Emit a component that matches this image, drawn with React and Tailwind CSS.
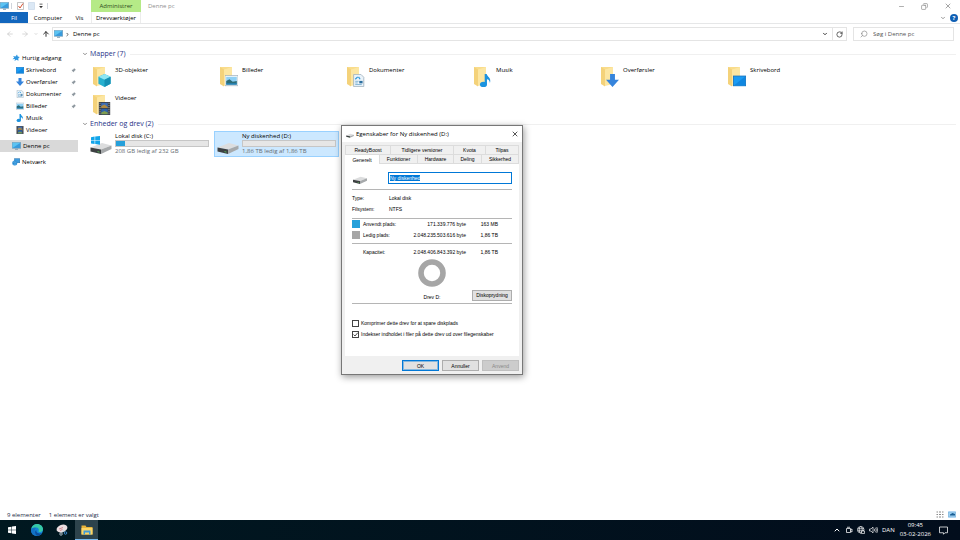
import React from 'react'
import { ArrowLeft, ArrowRight, ArrowUp, ChevronDown, ChevronRight, ChevronUp, Copy, Minus, RotateCw, Search, X } from 'lucide-react'
import { BsPinAngleFill } from 'react-icons/bs'

function PcIcon({ className }) {
    return (
        <svg viewBox="0 0 18 16" className={className} aria-hidden="true">
            <rect x="0.5" y="1" width="17" height="11.5" fill="#3a9bdc" stroke="#7d9bb0" strokeWidth="1" />
            <path d="M1 1.5h16L1 12z" fill="#5cc3f2" />
            <path d="M6 14.5h6" stroke="#7d9bb0" strokeWidth="2" />
        </svg>
    )
}

// small emblem used in the sidebar and on top of the folders
function Emblem({ kind, ...props }) {
    return (
        <svg viewBox="0 0 16 16" aria-hidden="true" {...props}>
            {kind === 'star' && <path d="M10 1l1.500 4 4 1-3 3 .5 4.500-4-2L5 14l1-4-5 .5 3.500-3.500L2 4l5 1z" fill="#2f97e0" />}
            {kind === 'desktop' && <>
                <rect x="0.500" y="2.500" width="15" height="12" fill="#1a9bf4" stroke="#1673bd" />
                <path d="M1 14L15 3v11z" fill="#1087e0" />
            </>}
            {kind === 'down' && <path d="M5 0h6v7h5l-8 9-8-9h5z" fill="#3584dc" />}
            {kind === 'doc' && <>
                <path d="M2 .5h9l3.500 3.500v11.500H2z" fill="#eaf3fa" stroke="#9fb0bd" />
                <path d="M4 6.500l3-3M8 3.500l2 3" stroke="#2f97d8" strokeWidth="1.500" />
                <path d="M4 9h4M4 11h3M4 13h8" stroke="#6ea7cc" strokeWidth="1" />
                <rect x="9" y="8.500" width="4" height="3" fill="#2c6f9f" />
            </>}
            {kind === 'picture' && <>
                <rect x="0" y="2" width="16" height="12.500" fill="#f5f8fa" stroke="#9aabb8" strokeWidth=".8" />
                <rect x="1.500" y="3.500" width="13" height="9.500" fill="#8fd0f5" />
                <path d="M1.500 8.500l4-2 4 3 5-1V13h-13z" fill="#2c6b76" />
                <path d="M1.500 11.500h13V13h-13z" fill="#2187c4" />
            </>}
            {kind === 'music' && <>
                <ellipse cx="5.500" cy="12.800" rx="4.300" ry="3.200" fill="#1c93df" />
                <path d="M7 0h2.500c.5 3.500 6 4.500 4 11-.4-2.800-1.600-4.200-3.700-4.500v6.500H7z" fill="#1c93df" />
            </>}
            {kind === 'video' && <>
                <rect x="1" y="0" width="14" height="16" fill="#3a3f45" />
                <path d="M2.500 1v14M13.500 1v14" stroke="#b9bec4" strokeWidth="1" strokeDasharray="1.300 1.300" />
                <rect x="4" y="1" width="8" height="6.500" fill="#3f6fb5" />
                <rect x="4" y="8.500" width="8" height="6.500" fill="#2d62a8" />
                <path d="M4 5l4-2 4 3v1.500H4z" fill="#b0893e" />
                <path d="M4 13l4-2 4 2v2H4z" fill="#7f9d4f" />
            </>}
            {kind === 'cube' && <>
                <path d="M8 0l7.500 3.500v8.500L8 16 .5 12V3.500z" fill="#27b0cf" />
                <path d="M8 0l7.500 3.500L8 7 .5 3.500z" fill="#8ee6f3" />
                <path d="M8 7l7.500-3.500v8.500L8 16z" fill="#1590b4" />
            </>}
            {kind === 'network' && <>
                <rect x="5" y="1.500" width="10.500" height="8" fill="#3c9be0" stroke="#236da8" />
                <circle cx="5.500" cy="10" r="5" fill="#2689d2" />
                <path d="M1.500 8.500c3-2 5 1 7.500-.5M3 13c1-2 4 0 6-1" stroke="#8ed0f7" strokeWidth="1.200" fill="none" />
            </>}
        </svg>
    )
}

function FolderIcon({ kind }) {
    return (
        <svg viewBox="0 0 20 22" className="h-[22px] w-5 shrink-0" aria-hidden="true">
            <path d="M1 1h12v16H1z" fill="#f9dc8b" />
            <path d="M5 3.500L13 1v17l-8 2z" fill="#fce6a2" />
            <path d="M1 1l4 2.500V20.500l-4-2.500z" fill="#f4d27a" />
            <Emblem kind={kind} x="6" y="8" width="13" height="13" />
        </svg>
    )
}

function DriveIcon({ windows, className }) {
    return (
        <svg viewBox="0 0 22 18" className={className} aria-hidden="true">
            <path d="M.5 11.500L12 7l9.500 2.500L11 13.500z" fill="#dcddde" />
            <path d="M.5 11.500L11 13.500v4.500L.5 15.500z" fill="#3d4042" />
            <path d="M11 13.500l10.500-4v3.500L11 18z" fill="#a6a9ab" />
            <path d="M7.500 15.200l2 .5v.8l-2-.5z" fill="#5fd35f" />
            {windows && <path d="M1 1.200L4.600.6V4H1zM5.200.5L10 0V4H5.200zM1 4.600h3.600V8L1 7.400zM5.200 4.600H10v4.200l-4.800-.7z" fill="#12a5ea" />}
        </svg>
    )
}

const quickAccess = [
    { name: 'Skrivebord', kind: 'desktop', pinned: true },
    { name: 'Overførsler', kind: 'down', pinned: true },
    { name: 'Dokumenter', kind: 'doc', pinned: true },
    { name: 'Billeder', kind: 'picture', pinned: true },
    { name: 'Musik', kind: 'music' },
    { name: 'Videoer', kind: 'video' },
]

const folders = [
    { name: '3D-objekter', kind: 'cube' },
    { name: 'Billeder', kind: 'picture' },
    { name: 'Dokumenter', kind: 'doc' },
    { name: 'Musik', kind: 'music' },
    { name: 'Overførsler', kind: 'down' },
    { name: 'Skrivebord', kind: 'desktop' },
    { name: 'Videoer', kind: 'video' },
]

const drives = [
    { name: 'Lokal disk (C:)', free: '208 GB ledig af 232 GB', used: 10, windows: true },
    { name: 'Ny diskenhed (D:)', free: '1,86 TB ledig af 1,86 TB', used: 0, selected: true },
]

function TitleBar() {
    return (
        <header className="flex h-3 items-center">
            <div className="flex w-[91px] items-center">
                <PcIcon className="h-2 w-[9px]" />
                <span className="ml-0.5 h-1.5 w-px bg-gray-300" />
                <button aria-label="Egenskaber" className="ml-[5px]">
                    <svg viewBox="0 0 14 16" className="h-2 w-[7px]">
                        <path d="M1 1h12v14H1z" fill="#fff" stroke="#8b8b8b" />
                        <path d="M3 8l3 4 6-9" fill="none" stroke="#d8502f" strokeWidth="2" />
                    </svg>
                </button>
                <button aria-label="Ny mappe" className="ml-1">
                    <svg viewBox="0 0 14 16" className="h-2 w-[7px]">
                        <path d="M1 1h12v14H1z" fill="#dbe8f5" stroke="#b8cde2" />
                    </svg>
                </button>
                <button aria-label="Tilpas værktøjslinje" className="ml-[3px]">
                    <svg viewBox="0 0 8 8" className="size-1.5"><path d="M2 1.500h4" stroke="#333" /><path d="M1.500 4h5L4 7z" fill="#333" /></svg>
                </button>
                <span className="ml-[3px] h-1.5 w-px bg-gray-300" />
            </div>
            <span className="flex h-3 w-[50px] items-center justify-center bg-[#b5ea87] leading-none text-[#2f4a1c]">Administrer</span>
            <span className="ml-[7px] text-[#909090]">Denne pc</span>
            <div className="ml-auto flex items-center gap-4 pr-2 text-[#777]">
                <button aria-label="Minimer"><Minus className="size-[7px]" /></button>
                <button aria-label="Gendan"><Copy className="size-[7px] -scale-x-100" /></button>
                <button aria-label="Luk"><X className="size-2" /></button>
            </div>
        </header>
    )
}

function RibbonTabs() {
    return (
        <nav className="flex h-3 items-center border-b border-[#e6e7e8]">
            <button className="h-[11px] w-7 bg-[#1266bd] text-white">Fil</button>
            <button className="w-10">Computer</button>
            <button className="w-[23px]">Vis</button>
            <button className="h-[11px] w-[50px] border-x border-[#ececec]">Drevværktøjer</button>
            <button aria-label="Udvid båndet" className="ml-auto text-[#777]"><ChevronDown className="size-1.5" strokeWidth={3} /></button>
            <button aria-label="Hjælp" className="mr-0.5 ml-1 flex size-2 items-center justify-center rounded-full bg-[#0f5fb4] font-bold text-white">?</button>
        </nav>
    )
}

function AddressBar() {
    return (
        <div className="flex h-5 items-center pr-1.5">
            <div className="flex w-[52px] items-center pl-1.5 text-[#c4c4c4]">
                <button aria-label="Tilbage"><ArrowLeft className="size-2" /></button>
                <button aria-label="Frem" className="ml-[7px]"><ArrowRight className="size-2" /></button>
                <button aria-label="Seneste" className="ml-[5px]"><ChevronDown className="size-1" strokeWidth={4} /></button>
                <button aria-label="Op" className="ml-1 text-[#333]"><ArrowUp className="size-2" strokeWidth={3} /></button>
            </div>
            <div className="flex h-3.5 flex-1 items-center border border-[#e4e4e4] pl-px">
                <PcIcon className="h-2 w-[9px]" />
                <ChevronRight className="ml-0.5 size-[5px]" strokeWidth={3} />
                <span className="ml-[3px]">Denne pc</span>
                <button aria-label="Tidligere placeringer" className="ml-auto mr-1"><ChevronDown className="size-1.5" strokeWidth={3} /></button>
                <button aria-label="Opdater" className="flex h-full w-3.5 items-center justify-center border-l border-[#e4e4e4]"><RotateCw className="size-[7px]" /></button>
            </div>
            <label className="ml-1.5 flex h-3.5 w-[101px] items-center gap-[5px] border border-[#e4e4e4] pl-1.5">
                <Search className="size-2 shrink-0 -scale-x-100 text-[#888]" />
                <input type="search" placeholder="Søg i Denne pc" aria-label="Søg i Denne pc" className="w-full min-w-0 outline-none placeholder:text-[#555]" />
            </label>
        </div>
    )
}

function Sidebar() {
    return (
        <aside className="w-[78px] shrink-0 pt-2">
            <a href="#hurtig" className="flex h-3 items-center gap-0.5 pl-3"><Emblem kind="star" className="size-2" />Hurtig adgang</a>
            {quickAccess.map((item) => (
                <a key={item.name} href="#mappe" className="flex h-3 items-center gap-0.5 pl-4">
                    <Emblem kind={item.kind} className="size-2" />
                    {item.name}
                    {item.pinned && <BsPinAngleFill className="mr-0.5 ml-auto size-[5px] text-[#8a949c]" />}
                </a>
            ))}
            <a href="#pc" className="mt-1 flex h-3 items-center gap-0.5 bg-[#d9d9d9] pl-3"><PcIcon className="h-2 w-[9px]" />Denne pc</a>
            <a href="#net" className="mt-1 flex h-3 items-center gap-0.5 pl-3"><Emblem kind="network" className="size-2" />Netværk</a>
        </aside>
    )
}

function GroupHeader({ children }) {
    return (
        <h2 className="flex h-3 items-center gap-0.5 pl-1 text-[7px] text-[#1e3287]">
            <ChevronDown className="size-1.5 text-[#666]" strokeWidth={3} />
            {children}
            <span className="mr-1 ml-0.5 h-px flex-1 bg-[#f0f0f0]" />
        </h2>
    )
}

function FileArea() {
    return (
        <main className="min-w-0 flex-1 pt-1">
            <GroupHeader>Mapper (7)</GroupHeader>
            <ul className="mt-0.5 flex flex-wrap pl-[9px]">
                {folders.map((folder) => (
                    <li key={folder.name} className="flex h-7 w-[127px] gap-[3px] pt-1 pl-[5px]">
                        <FolderIcon kind={folder.kind} />
                        <span>{folder.name}</span>
                    </li>
                ))}
            </ul>
            <GroupHeader>Enheder og drev (2)</GroupHeader>
            <ul className="mt-px flex flex-wrap gap-0.5 pl-[9px]">
                {drives.map((drive) => (
                    <li key={drive.name} className={`flex h-[26px] w-[125px] border pr-0.5 pl-0.5 ${drive.selected ? 'border-[#99d1ff] bg-[#cce8ff]' : 'border-transparent'}`}>
                        <DriveIcon windows={drive.windows} className="mt-1 mr-[3px] h-[18px] w-[22px] shrink-0" />
                        <div className="flex flex-1 flex-col">
                            <span>{drive.name}</span>
                            <div className="h-[7px] border border-[#c6c6c6] bg-[#e6e6e6]">
                                <div className="h-full bg-[#26a0da]" style={{ width: `${drive.used}%` }} />
                            </div>
                            <span className="text-[#666d73]">{drive.free}</span>
                        </div>
                    </li>
                ))}
            </ul>
        </main>
    )
}

function StatusBar() {
    return (
        <footer className="flex h-[11px] items-center gap-2 pr-1 pl-[7px] text-[#1d2c48]">
            <span>9 elementer</span>
            <span>1 element er valgt</span>
            <div className="ml-auto flex gap-1">
                <button aria-label="Detaljer">
                    <svg viewBox="0 0 16 14" className="h-[7px] w-2"><path d="M1 2h3M6 2h4M12 2h3M1 7h3M6 7h4M12 7h3M1 12h3M6 12h4M12 12h3" stroke="#8a8a8a" strokeWidth="2" /></svg>
                </button>
                <button aria-label="Store ikoner" className="bg-[#cce8ff]">
                    <svg viewBox="0 0 16 14" className="h-[7px] w-2"><path d="M1 2h14v10H1z" fill="#9fd2f3" stroke="#6aa2cc" /><path d="M4 7l5-3 5 2v3H4z" fill="#1b5f96" /></svg>
                </button>
            </div>
        </footer>
    )
}

function Tab({ active, className = '', children }) {
    return (
        <button role="tab" aria-selected={!!active} className={`whitespace-nowrap border-t border-r border-[#dcdcdc] ${active ? 'bg-white' : 'bg-[#f0f0f0]'} ${className}`}>
            {children}
        </button>
    )
}

function UsageRow({ color = '', label, bytes, size }) {
    return (
        <tr className="h-[11px]">
            <td className="w-[11px] p-0"><span className={`block size-2 ${color}`} /></td>
            <th className="p-0 text-left font-normal whitespace-nowrap">{label}</th>
            <td className="p-0 text-right whitespace-nowrap">{bytes}</td>
            <td className="w-[32px] p-0 text-right whitespace-nowrap">{size}</td>
            <td className="w-[14px] p-0" />
        </tr>
    )
}

function CheckOption({ checked, children }) {
    return (
        <label className="flex h-[11px] items-center gap-0.5 whitespace-nowrap">
            <span className="relative flex size-[7px] shrink-0">
                <input type="checkbox" defaultChecked={checked} className="peer size-[7px] appearance-none border border-[#444] bg-white" />
                <svg viewBox="0 0 7 7" className="pointer-events-none absolute inset-0 hidden peer-checked:block">
                    <path d="M1.500 3.500L3 5l2.800-3.300" fill="none" stroke="#222" strokeWidth=".8" />
                </svg>
            </span>
            {children}
        </label>
    )
}

function PropertiesDialog() {
    return (
        <section role="dialog" aria-label="Egenskaber for Ny diskenhed (D:)" className="absolute top-[125px] left-[341px] w-[182px] border border-[#777] bg-[#f0f0f0] font-['Liberation_Sans',sans-serif] text-[5px] leading-[8px] text-black shadow-[1px_2px_7px_rgba(0,0,0,0.4)]">
            <div className="flex h-4 items-center gap-0.5 bg-white pr-[3px] pl-1 font-['Open_Sans',sans-serif] text-[6px]">
                <DriveIcon className="h-[7px] w-2" />
                Egenskaber for Ny diskenhed (D:)
                <button aria-label="Luk" className="ml-auto"><X className="size-2" /></button>
            </div>
            <div className="px-[3px] pt-[3px]">
                <div role="tablist">
                    <div className="flex h-[9px]">
                        <Tab className="w-[46px] border-l">ReadyBoost</Tab>
                        <Tab className="w-[63px]">Tidligere versioner</Tab>
                        <Tab className="w-8">Kvota</Tab>
                        <Tab className="flex-1">Tilpas</Tab>
                    </div>
                    <div className="flex h-[10px]">
                        <Tab active className="w-[35px]">Generelt</Tab>
                        <Tab className="w-[38px] border-b">Funktioner</Tab>
                        <Tab className="w-9 border-b">Hardware</Tab>
                        <Tab className="w-7 border-b">Deling</Tab>
                        <Tab className="flex-1 border-b">Sikkerhed</Tab>
                    </div>
                </div>
                <div className="h-[192px] bg-white pt-2 pr-[7px] pl-[7px]">
                    <div className="flex h-3 items-center">
                        <DriveIcon className="h-3 w-4" />
                        <input
                            autoFocus
                            aria-label="Navn"
                            defaultValue="Ny diskenhed"
                            onFocus={(e) => e.target.select()}
                            className="ml-5 h-3 min-w-0 flex-1 border border-[#0078d7] bg-white pl-px outline-none selection:bg-[#0078d7] selection:text-white"
                        />
                    </div>
                    <dl className="mt-[5px] grid grid-cols-[37px_1fr] gap-y-[3px] border-t border-[#b5b5b5] pt-1 pb-[5px]">
                        <dt>Type:</dt>
                        <dd>Lokal disk</dd>
                        <dt>Filsystem:</dt>
                        <dd>NTFS</dd>
                    </dl>
                    <table className="w-full border-collapse">
                        <tbody className="border-y border-[#b5b5b5]">
                            <UsageRow color="bg-[#26a0da]" label="Anvendt plads:" bytes="171.339.776 byte" size="163 MB" />
                            <UsageRow color="bg-[#a6a6a6]" label="Ledig plads:" bytes="2.048.235.503.616 byte" size="1,86 TB" />
                            <tr className="h-[3px]" />
                        </tbody>
                        <tbody>
                            <tr className="h-[3px]" />
                            <UsageRow label="Kapacitet:" bytes="2.048.406.843.392 byte" size="1,86 TB" />
                        </tbody>
                    </table>
                    <div className="grid grid-cols-[1fr_auto_1fr] items-end border-b border-[#b5b5b5] pt-px pb-0.5">
                        <span />
                        <div className="flex flex-col items-center">
                            <svg viewBox="0 0 28 28" className="size-7"><circle cx="14" cy="14" r="11" fill="none" stroke="#a6a6a6" strokeWidth="5.600" /></svg>
                            <span className="mt-1.5">Drev D:</span>
                        </div>
                        <button className="h-[11px] w-10 justify-self-end border border-[#adadad] bg-[#e1e1e1] leading-[9px]">Diskoprydning</button>
                    </div>
                    <div className="pt-3.5">
                        <CheckOption>Komprimer dette drev for at spare diskplads</CheckOption>
                        <CheckOption checked>Indekser indholdet i filer på dette drev ud over filegenskaber</CheckOption>
                    </div>
                </div>
            </div>
            <div className="flex justify-end gap-[3px] pt-1 pr-[3px] pb-[3px]">
                <button className="h-[11px] w-[37px] border border-[#0078d7] bg-[#e1e1e1] ring-1 ring-[#0078d7]/40 ring-inset">OK</button>
                <button className="h-[11px] w-[37px] border border-[#adadad] bg-[#e1e1e1]">Annuller</button>
                <button disabled className="h-[11px] w-[37px] border border-[#bfbfbf] bg-[#cccccc] text-[#888]">Anvend</button>
            </div>
        </section>
    )
}

function Taskbar() {
    return (
        <nav className="flex h-5 items-center bg-linear-to-r from-[#001820] to-[#020d1c] text-white">
            <button aria-label="Start" className="flex w-6 justify-center">
                <svg viewBox="0 0 16 16" className="size-2" fill="#fff"><path d="M0 2.300L7 1.300V7.500H0zM8 1.200L16 0v7.500H8zM0 8.500h7v6.200L0 13.700zM8 8.500h8V16L8 14.800z" /></svg>
            </button>
            <button aria-label="Microsoft Edge" className="flex w-[25px] justify-center">
                <svg viewBox="0 0 24 24" className="size-3">
                    <circle cx="12" cy="12" r="12" fill="#1486d8" />
                    <path d="M.5 10C2 3 7 0 12 0c7 0 12 5 12 10 0 4-3 6-6 6-2 0-3.500-1-3-2 2-3 0-7-5-7-4 0-8 1-9.500 3z" fill="#36c9a6" />
                    <path d="M10 8c-4 3-4 12 4 15.500C6 25-1 19 .2 11 2 8 6 7 10 8z" fill="#1372c4" />
                    <path d="M11 11c-2 5 3 10 11 7-2 4-6 6-9 5.500C7 21 7 14 11 11z" fill="#0c4e9c" />
                </svg>
            </button>
            <button aria-label="Klippeværktøj" className="flex w-[26px] justify-center">
                <svg viewBox="0 0 24 24" className="size-3">
                    <ellipse cx="12" cy="9" rx="11" ry="7.500" fill="#ecdfe1" transform="rotate(-18 12 9)" />
                    <path d="M6 10l8-3M8 13l5-2" stroke="#c9707a" strokeWidth="1.500" />
                    <circle cx="10" cy="20" r="2.500" fill="none" stroke="#d8e4ee" strokeWidth="1.500" />
                    <circle cx="19" cy="18" r="2.500" fill="none" stroke="#3f8ed6" strokeWidth="1.800" />
                    <path d="M11 18l6-6M17 16l-4-4" stroke="#c6d4df" strokeWidth="1.500" />
                </svg>
            </button>
            <button aria-label="Stifinder" className="flex h-5 w-[23px] items-center justify-center border-b border-[#76b9ed] bg-[#2d434c]">
                <svg viewBox="0 0 24 20" className="h-[10px] w-3">
                    <path d="M1 1h8l2 3h12v15H1z" fill="#e8b33a" />
                    <path d="M1 6h22v13H1z" fill="#fcd667" />
                    <path d="M5 11h14v8h-3v-4H8v4H5z" fill="#3f9ad8" />
                </svg>
            </button>
            <div className="ml-auto flex items-center pr-3">
                <button aria-label="Vis skjulte ikoner"><ChevronUp className="size-2" strokeWidth={3} /></button>
                <svg viewBox="0 0 16 16" className="ml-1 size-2" fill="none" stroke="#fff" strokeWidth="1.500"><path d="M3 5h8v8H3zM11 7.500l3-1.500v6l-3-1.500M4 2.500h6" /></svg>
                <svg viewBox="0 0 16 16" className="ml-1 size-2" fill="none" stroke="#fff" strokeWidth="1.300"><circle cx="7.500" cy="7.500" r="6.500" /><ellipse cx="7.500" cy="7.500" rx="3" ry="6.500" /><path d="M1 5.500h13M1 9.500h13" /><path d="M9 10h6v5H9z" fill="#06121e" /></svg>
                <svg viewBox="0 0 18 16" className="ml-1 h-2 w-[9px]" fill="none" stroke="#fff" strokeWidth="1.300"><path d="M1 6h3l4-4v12l-4-4H1zM10.500 5.500q2 2.500 0 5M13 3.500q3.500 4.500 0 9M15.500 2q4 6 0 12" /></svg>
                <span className="ml-1">DAN</span>
                <time className="ml-[5px] flex flex-col items-center leading-[9px]"><span>09:45</span><span>03-02-2026</span></time>
                <button aria-label="Meddelelser" className="ml-2">
                    <svg viewBox="0 0 18 18" className="size-[9px]" fill="none" stroke="#fff" strokeWidth="1.500"><path d="M1 2h16v11.500h-5L9 16.500v-3H1z" /></svg>
                </button>
            </div>
        </nav>
    )
}

function App() {
    return (
        <div className="relative flex h-screen flex-col bg-white font-['Open_Sans',sans-serif] text-[6px] leading-[8px] text-black">
            <TitleBar />
            <RibbonTabs />
            <AddressBar />
            <div className="flex min-h-0 flex-1">
                <Sidebar />
                <FileArea />
            </div>
            <StatusBar />
            <Taskbar />
            <PropertiesDialog />
        </div>
    )
}

export default App
